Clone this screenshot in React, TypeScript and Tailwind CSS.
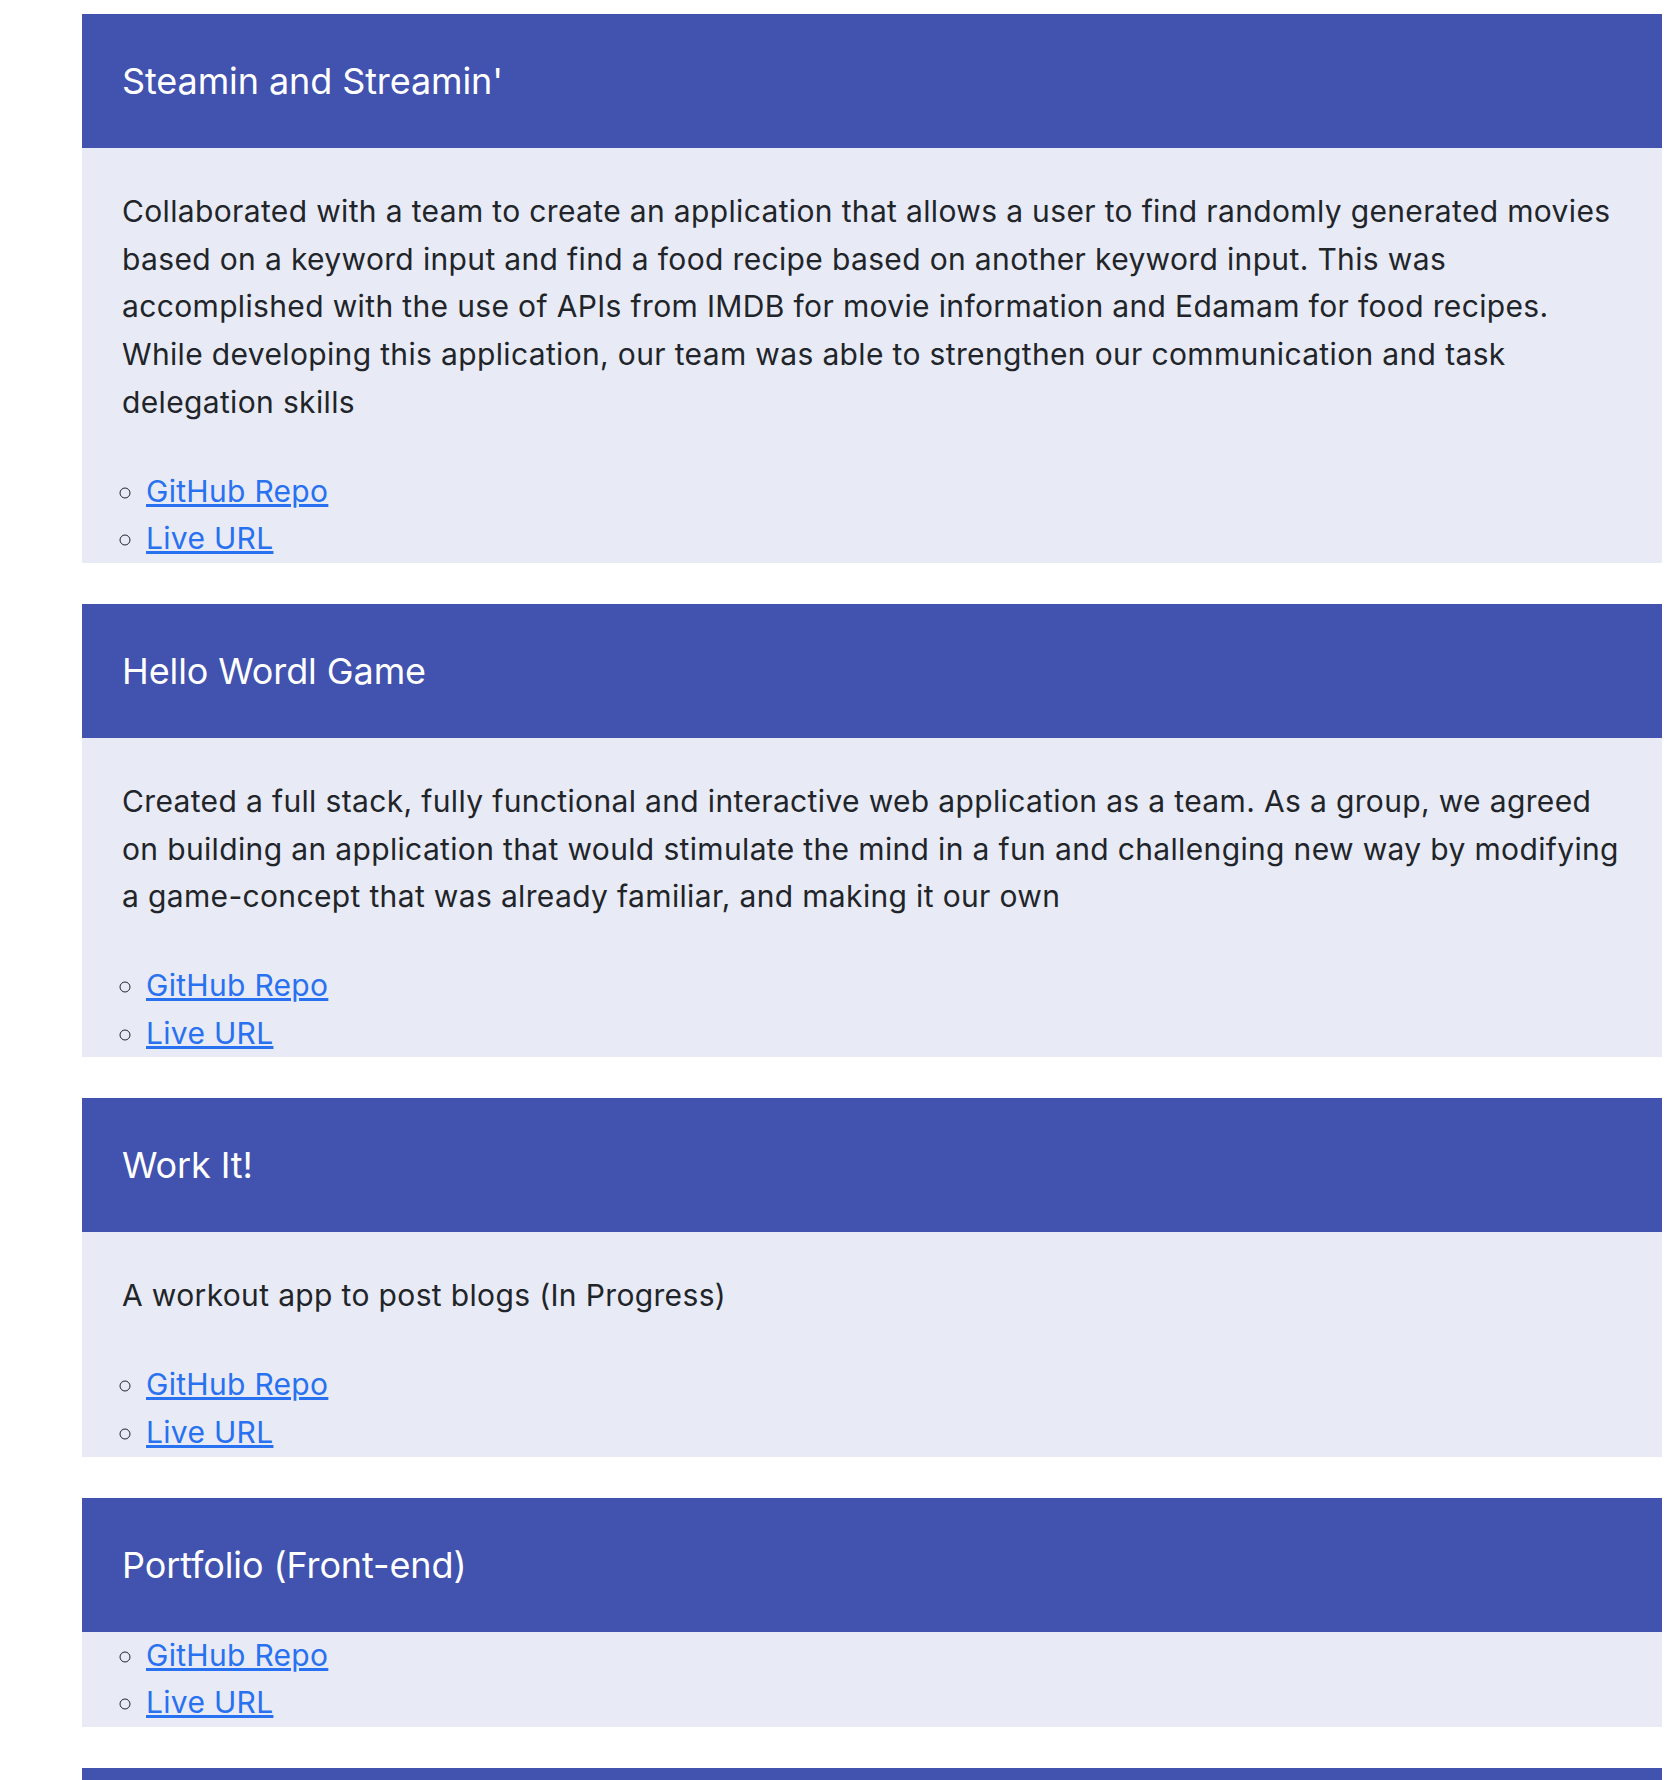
const projects = [
  {
    title: "Steamin and Streamin'",
    desc: "Collaborated with a team to create an application that allows a user to find randomly generated movies based on a keyword input and find a food recipe based on another keyword input. This was accomplished with the use of APIs from IMDB for movie information and Edamam for food recipes. While developing this application, our team was able to strengthen our communication and task delegation skills",
  },
  {
    title: "Hello Wordl Game",
    desc: "Created a full stack, fully functional and interactive web application as a team. As a group, we agreed on building an application that would stimulate the mind in a fun and challenging new way by modifying a game-concept that was already familiar, and making it our own",
  },
  {
    title: "Work It!",
    desc: "A workout app to post blogs (In Progress)",
  },
  {
    title: "Portfolio (Front-end)",
    desc: "",
  },
  {
    title: "Portfolio (Back-end)",
    desc: "",
  },
];

function ProjectCard({ title, desc }: { title: string; desc: string }) {
  return (
    <section className="bg-[#e8eaf6]">
      {/* Header */}
      <div className="bg-[#4152af] h-[134px] flex items-center px-10">
        <h2 className="text-white text-[36px] leading-none tracking-[-0.1px]">
          {title}
        </h2>
      </div>

      {/* Body */}
      {desc && (
        <p className="px-10 pt-10 pb-[41px] text-[30px] leading-[47.7px] tracking-[0.35px] text-[#212529]">
          {desc}
        </p>
      )}
      <ul className="list-[circle] pl-16 text-[30px] leading-[47.7px] tracking-[0.3px] text-[#212529]">
        <li>
          <a href="#" className="text-[#2871f0] underline">
            GitHub Repo
          </a>
        </li>
        <li>
          <a href="#" className="text-[#2871f0] underline">
            Live URL
          </a>
        </li>
      </ul>
    </section>
  );
}

export default function App() {
  return (
    <div
      className="h-[1780px] overflow-hidden bg-white pt-[14px] pl-[82px] pr-[14px]"
      style={{ fontFamily: "Inter, 'Noto Sans', sans-serif" }}
    >
      <div className="flex flex-col gap-[41px]">
        {projects.map((p) => (
          <ProjectCard key={p.title} title={p.title} desc={p.desc} />
        ))}
      </div>
    </div>
  );
}
